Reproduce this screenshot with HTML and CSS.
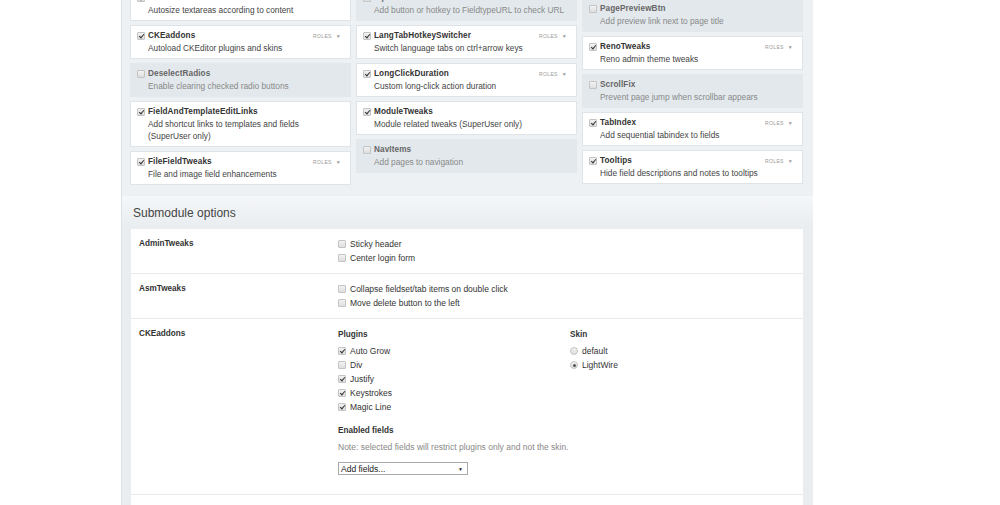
FILE: index.html
```html
<!DOCTYPE html>
<html lang="en">
<head>
  <meta charset="UTF-8">
  <link rel="stylesheet" href="styles.css">
</head>
<body>
  <div class="panel">
    <div class="mods">
      <div class="col">
        <div class="card">
          <div class="card-head"><span class="cb on"></span><b class="title">AutosizeTextareas</b></div>
          <div class="desc">Autosize textareas according to content</div>
        </div>
        <div class="card">
          <div class="card-head"><span class="cb on"></span><b class="title">CKEaddons</b><span class="roles">Roles &#9660;</span></div>
          <div class="desc">Autoload CKEditor plugins and skins</div>
        </div>
        <div class="card off">
          <div class="card-head"><span class="cb"></span><b class="title">DeselectRadios</b></div>
          <div class="desc">Enable clearing checked radio buttons</div>
        </div>
        <div class="card">
          <div class="card-head"><span class="cb on"></span><b class="title">FieldAndTemplateEditLinks</b></div>
          <div class="desc">Add shortcut links to templates and fields<br>(SuperUser only)</div>
        </div>
        <div class="card">
          <div class="card-head"><span class="cb on"></span><b class="title">FileFieldTweaks</b><span class="roles">Roles &#9660;</span></div>
          <div class="desc">File and image field enhancements</div>
        </div>
      </div>

      <div class="col">
        <div class="card off">
          <div class="card-head"><span class="cb"></span><b class="title">InputfieldURLChecker</b></div>
          <div class="desc">Add button or hotkey to FieldtypeURL to check URL</div>
        </div>
        <div class="card">
          <div class="card-head"><span class="cb on"></span><b class="title">LangTabHotkeySwitcher</b><span class="roles">Roles &#9660;</span></div>
          <div class="desc">Switch language tabs on ctrl+arrow keys</div>
        </div>
        <div class="card">
          <div class="card-head"><span class="cb on"></span><b class="title">LongClickDuration</b><span class="roles">Roles &#9660;</span></div>
          <div class="desc">Custom long-click action duration</div>
        </div>
        <div class="card">
          <div class="card-head"><span class="cb on"></span><b class="title">ModuleTweaks</b></div>
          <div class="desc">Module related tweaks (SuperUser only)</div>
        </div>
        <div class="card off">
          <div class="card-head"><span class="cb"></span><b class="title">NavItems</b></div>
          <div class="desc">Add pages to navigation</div>
        </div>
      </div>

      <div class="col late">
        <div class="card off">
          <div class="card-head"><span class="cb"></span><b class="title">PagePreviewBtn</b></div>
          <div class="desc">Add preview link next to page title</div>
        </div>
        <div class="card">
          <div class="card-head"><span class="cb on"></span><b class="title">RenoTweaks</b><span class="roles">Roles &#9660;</span></div>
          <div class="desc">Reno admin theme tweaks</div>
        </div>
        <div class="card off">
          <div class="card-head"><span class="cb"></span><b class="title">ScrollFix</b></div>
          <div class="desc">Prevent page jump when scrollbar appears</div>
        </div>
        <div class="card">
          <div class="card-head"><span class="cb on"></span><b class="title">TabIndex</b><span class="roles">Roles &#9660;</span></div>
          <div class="desc">Add sequential tabindex to fields</div>
        </div>
        <div class="card">
          <div class="card-head"><span class="cb on"></span><b class="title">Tooltips</b><span class="roles">Roles &#9660;</span></div>
          <div class="desc">Hide field descriptions and notes to tooltips</div>
        </div>
      </div>
    </div>

    <div class="sub">
      <h2 class="sub-head">Submodule options</h2>
      <div class="sub-box">
        <div class="sub-row">
          <div class="sub-name">AdminTweaks</div>
          <div class="sub-opts">
            <div class="opt"><span class="cb"></span>Sticky header</div>
            <div class="opt"><span class="cb"></span>Center login form</div>
          </div>
        </div>

        <div class="sub-row">
          <div class="sub-name">AsmTweaks</div>
          <div class="sub-opts">
            <div class="opt"><span class="cb"></span>Collapse fieldset/tab items on double click</div>
            <div class="opt"><span class="cb"></span>Move delete button to the left</div>
          </div>
        </div>

        <div class="sub-row big">
          <div class="sub-name">CKEaddons</div>
          <div class="sub-opts split">
            <div class="group">
              <div class="group-title">Plugins</div>
              <div class="opt"><span class="cb on"></span>Auto Grow</div>
              <div class="opt"><span class="cb"></span>Div</div>
              <div class="opt"><span class="cb on"></span>Justify</div>
              <div class="opt"><span class="cb on"></span>Keystrokes</div>
              <div class="opt"><span class="cb on"></span>Magic Line</div>

              <div class="group-title spaced">Enabled fields</div>
              <div class="note">Note: selected fields will restrict plugins only and not the skin.</div>
              <div class="pick"><span>Add fields...</span><span class="pick-arrow">&#9660;</span></div>
            </div>
            <div class="group">
              <div class="group-title">Skin</div>
              <div class="opt"><span class="rd"></span>default</div>
              <div class="opt"><span class="rd on"></span>LightWire</div>
            </div>
          </div>
        </div>

        <div class="sub-row empty"></div>
      </div>
    </div>
  </div>
</body>
</html>
```

FILE: styles.css
```css
body{
	margin:0;
	background:#fff;
	font-family:"Liberation Sans", Arial, sans-serif;
	color:#333;
	font-size:8.5px;
}
.panel{
	width:692px;
	margin:-13px 0 0 121px;
	box-sizing:border-box;
	border-left:1px solid #dde3e8;
	background:#eef1f4;
}

/* module cards */
.mods{
	display:grid;
	grid-template-columns:repeat(3, 1fr);
	column-gap:5px;
	padding:0 10px 11px 8px;
	align-items:start;
}
.col{
	display:flex;
	flex-direction:column;
	gap:4px;
}
.col.late{margin-top:11px;}
.card{
	background:#fff;
	border:1px solid #dfe4e8;
	padding:4px 10px 4px 6px;
	line-height:12px;
}
.card.off{
	background:#e3e8ed;
	border-color:#e3e8ed;
}
.card-head{
	display:flex;
	align-items:center;
}
.title{
	font-size:8.2px;
	letter-spacing:.1px;
	color:#333;
	margin-left:3px;
}
.card.off .title{color:#666;}
.desc{
	margin-left:11px;
	font-size:8.3px;
	color:#444;
	white-space:nowrap;
}
.card.off .desc{color:#888;}
.roles{
	margin-left:auto;
	font-size:5px;
	letter-spacing:.4px;
	text-transform:uppercase;
	color:#999;
	word-spacing:2px;
	margin-right:-1px;
}

/* fake inputs */
.cb,.rd{
	position:relative;
	display:inline-block;
	width:8px;
	height:8px;
	box-sizing:border-box;
	border:1px solid #c4c4c4;
	background:linear-gradient(#f2f2f2, #dedede);
	border-radius:1px;
	flex:none;
}
.cb.on::after{
	content:"";
	position:absolute;
	left:2px;
	top:0;
	width:2px;
	height:4px;
	border:solid #333;
	border-width:0 1.3px 1.3px 0;
	transform:rotate(40deg);
}
.rd{border-radius:50%;}
.rd.on::after{
	content:"";
	position:absolute;
	left:1.5px;
	top:1.5px;
	width:3px;
	height:3px;
	border-radius:50%;
	background:#555;
}

/* submodule options */
.sub{
	background:#e9edf0;
	border-top:1px solid #f5f7f9;
}
.sub-head{
	margin:0;
	height:32px;
	line-height:32px;
	padding-left:11px;
	font-size:12px;
	font-weight:normal;
	color:#444;
	background:linear-gradient(#f4f6f8, #e9edf0);
}
.sub-box{
	margin:0 10px 0 9px;
	background:#fff;
}
.sub-row{
	display:grid;
	grid-template-columns:199px 1fr;
	padding:8px 0 8px 8px;
	border-bottom:1px solid #e6ecef;
}
.sub-row.big{padding-bottom:19px;}
.sub-row.empty{height:30px;border:0;}
.sub-name{
	font-weight:bold;
	font-size:8.2px;
	line-height:12px;
	padding-top:1px;
}
.sub-opts.split{
	display:grid;
	grid-template-columns:232px 1fr;
}
.opt{
	display:flex;
	align-items:center;
	gap:4px;
	line-height:14px;
}
.group-title{
	font-weight:bold;
	font-size:8.2px;
	line-height:14px;
	margin-bottom:2px;
	padding-top:1px;
}
.group-title.spaced{margin-top:9px;}
.note{
	color:#888;
	line-height:14px;
}
.pick{
	display:flex;
	justify-content:space-between;
	align-items:center;
	width:130px;
	height:13px;
	box-sizing:border-box;
	margin-top:8px;
	padding:0 4px 0 2px;
	border:1px solid #a9a9a9;
	background:#fff;
	color:#222;
}
.pick-arrow{font-size:5px;}
```
